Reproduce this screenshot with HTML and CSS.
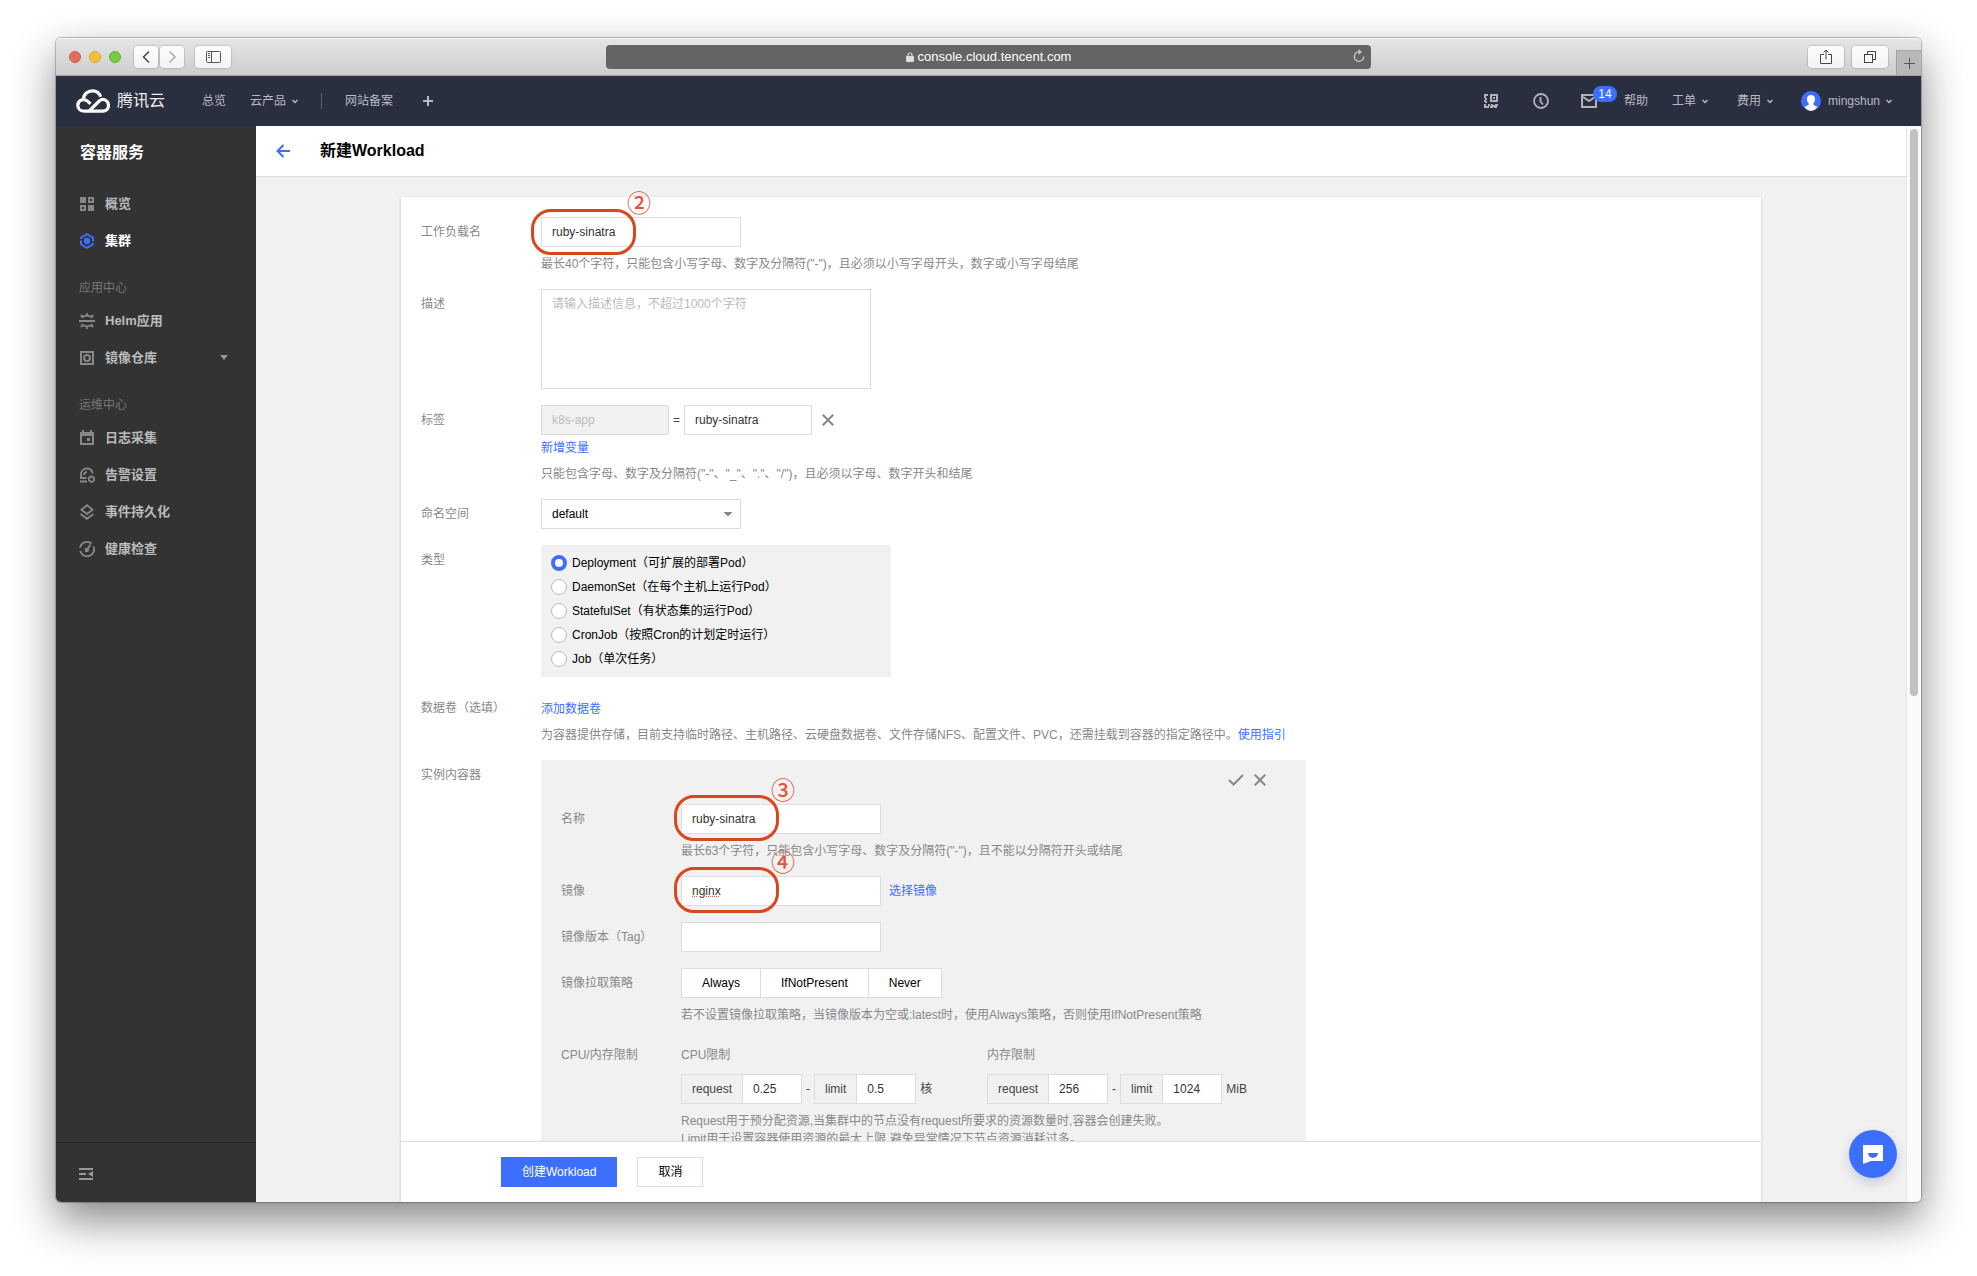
FILE: index.html
```html
<!DOCTYPE html>
<html lang="zh-CN">

<head>
  <meta charset="utf-8">
  <title>新建Workload - 容器服务</title>
  <link rel="stylesheet" href="styles.css">
</head>

<body>
<div class="window">

  <!-- Browser toolbar -->
  <div class="toolbar">
    <div class="toolbar-left">
      <div class="lights"><i class="red"></i><i class="yellow"></i><i class="green"></i></div>
      <div class="nav-buttons">
        <button type="button" aria-label="后退"><svg width="24" height="22" viewBox="0 0 24 22"><path d="M15 5.500l-5.500 5.500 5.500 5.500" fill="none" stroke="#444" stroke-width="1.500"/></svg></button>
        <button type="button" aria-label="前进"><svg width="24" height="22" viewBox="0 0 24 22"><path d="M9.500 5.500l5.500 5.500-5.500 5.500" fill="none" stroke="#aaa" stroke-width="1.500"/></svg></button>
      </div>
      <button class="wide" type="button" aria-label="边栏"><svg width="15" height="12" viewBox="0 0 15 12" fill="none" stroke="#555"><rect x="0.500" y="0.500" width="14" height="11" rx="1"/><path d="M5.500 0v12M2 2.500h2M2 4.500h2M2 6.500h2"/></svg></button>
    </div>
    <div class="address">
      <svg width="8" height="10" viewBox="0 0 8 10"><rect y="4" width="8" height="6" rx="1" fill="#ddd"/><path d="M2 5V3a2 2 0 0 1 4 0v2" fill="none" stroke="#ddd" stroke-width="1.200"/></svg>
      <span>console.cloud.tencent.com</span>
      <svg class="reload" width="12" height="14" viewBox="0 0 12 14"><path d="M6 2.900A4.700 4.700 0 1 0 10.700 7.500" fill="none" stroke="#ccc" stroke-width="1.200"/><path d="M5.500 0L9 2.900 5.500 5.800z" fill="#ccc"/></svg>
    </div>
    <div class="toolbar-right">
      <button class="wide" type="button" aria-label="共享"><svg width="12" height="16" viewBox="0 0 12 16" fill="none" stroke="#444"><path d="M4 5.500H.5v9h11v-9H8M6 10.500V1M3.500 3.500L6 1l2.500 2.500"/></svg></button>
      <button class="wide" type="button" aria-label="标签页概览"><svg width="14" height="14" viewBox="0 0 14 14" fill="none" stroke="#444"><rect x="1.500" y="4.500" width="8" height="8"/><path d="M4.500 4V1.500h8v8H10"/></svg></button>
      <button class="new-tab" type="button" aria-label="新标签页"><svg width="11" height="11" viewBox="0 0 11 11"><path d="M5.500 0v11M0 5.500h11" stroke="#555"/></svg></button>
    </div>
  </div>

  <!-- Console header -->
  <header class="topnav">
    <a class="logo" href="#">
      <svg width="34" height="24" viewBox="0 0 34 24" fill="none" stroke="#fff" stroke-width="3.200"><path d="M7.500 10.600C7.500 5.300 11.500 1.900 16.500 1.900c4 0 7 2.200 8.200 5.800M13 22.200L23.500 11.800c3.800-3 9-.3 9 4.500 0 3.500-2.500 5.900-5.800 5.900H8.500c-4 0-6.700-2.600-6.700-5.800 0-5.200 6.100-7.700 9.700-4.200l3 2.700"/></svg>
      <span>腾讯云</span>
    </a>
    <nav class="topnav-left">
      <a href="#">总览</a>
      <a href="#">云产品<svg class="chev" width="6" height="5" viewBox="0 0 6 5"><path d="M.5 1L3 3.500 5.500 1"/></svg></a>
      <i class="sep"></i>
      <a href="#">网站备案</a>
      <a class="add" href="#" aria-label="添加"><svg width="10" height="10" viewBox="0 0 10 10"><path d="M5 0v10M0 5h10" stroke="#b8bbc0" stroke-width="2"/></svg></a>
    </nav>
    <nav class="topnav-right">
      <a href="#" aria-label="小程序"><svg width="14" height="14" viewBox="0 0 14 14" fill="#b0b3b8"><path d="M0 0h4v2H2v2H0zM0 6h2v1h1v2H1V8H0zM1 4h2v2H1zM6 0h8v8H6zM8 2v4h4V2zM9 3h2v2H9zM0 10h2v2h3v2H0zM4 10h2v2H4zM7 10h2v1h2v-1h3v2h-1v2h-3v-1H9v1H6v-2h1z" fill-rule="evenodd"/></svg></a>
      <a class="clock" href="#" aria-label="历史"><svg width="16" height="16" viewBox="0 0 16 16" fill="none" stroke="#b0b3b8" stroke-width="1.800"><circle cx="8" cy="8" r="7"/><path d="M7.500 4v4.500L10 11.500"/></svg></a>
      <a class="mail" href="#" aria-label="消息"><svg width="16" height="14" viewBox="0 0 16 14" fill="none" stroke="#b0b3b8" stroke-width="2"><rect x="1" y="1" width="14" height="12"/><path d="M2 3l6 4 6-4"/></svg><span class="badge">14</span></a>
      <a class="help" href="#">帮助</a>
      <a class="ticket" href="#">工单<svg class="chev" width="6" height="5" viewBox="0 0 6 5"><path d="M.5 1L3 3.500 5.500 1"/></svg></a>
      <a class="cost" href="#">费用<svg class="chev" width="6" height="5" viewBox="0 0 6 5"><path d="M.5 1L3 3.500 5.500 1"/></svg></a>
      <a class="user" href="#"><svg width="20" height="20" viewBox="0 0 20 20"><circle cx="10" cy="10" r="10" fill="#3d6fff"/><path d="M10 4c2.800 0 4.200 2 4 4.600-.1 2-1 3.200-1.700 4v1.100l4.200 2.300A10 10 0 0 1 10 20a10 10 0 0 1-6.500-4l4.200-2.300v-1.100c-.7-.8-1.600-2-1.700-4C5.800 6 7.200 4 10 4z" fill="#fff"/></svg><span>mingshun</span><svg class="chev" width="6" height="5" viewBox="0 0 6 5"><path d="M.5 1L3 3.500 5.500 1"/></svg></a>
    </nav>
  </header>

  <div class="body">
    <!-- Side menu -->
    <aside class="sidebar">
      <h2>容器服务</h2>
      <ul>
        <li><a href="#"><svg width="16" height="16" viewBox="0 0 16 16" fill="#888"><path d="M1 1h6v6H1zM9 1h6v6H9zM11 3v2h2V3zM1 9h6v6H1zM3 11v2h2v-2zM9 9h6v6H9z" fill-rule="evenodd"/></svg>概览</a></li>
        <li><a class="active" href="#"><svg width="16" height="16" viewBox="0 0 16 16" fill="none" stroke="#3d6fff" stroke-width="2"><path d="M2 6V4.700L8 1.200l6 3.500v3.800M2 7.500v3.800l6 3.500 6-3.500V10"/><circle cx="8" cy="8" r="3.200" fill="#3d6fff" stroke="none"/></svg>集群</a></li>
      </ul>
      <h3>应用中心</h3>
      <ul>
        <li><a href="#"><svg width="16" height="16" viewBox="0 0 16 16" fill="none" stroke="#888" stroke-width="1.800"><path d="M0 8h16M2.500 4.800c3-2.800 8-2.800 11 0M2.500 11.200c3 2.800 8 2.800 11 0M8 0v2.500M8 13.500V16M1.800 1.800l1.700 2M14.200 1.800l-1.700 2M1.800 14.200l1.700-2M14.200 14.200l-1.700-2"/></svg>Helm应用</a></li>
        <li><a href="#"><svg width="16" height="16" viewBox="0 0 16 16" fill="none" stroke="#888" stroke-width="2"><rect x="2" y="2" width="12" height="12"/><circle cx="8" cy="8" r="3"/></svg>镜像仓库<svg class="caret" width="8" height="5" viewBox="0 0 8 5"><path d="M0 0h8L4 5z" fill="#999"/></svg></a></li>
      </ul>
      <h3>运维中心</h3>
      <ul>
        <li><a href="#"><svg width="16" height="16" viewBox="0 0 16 16" fill="#888"><path d="M3 0h2v2h6V0h2v2h2v13H1V2h2zM3 6v7h10V6zM8 8h3v3H8z" fill-rule="evenodd"/></svg>日志采集</a></li>
        <li><a href="#"><svg width="16" height="16" viewBox="0 0 16 16" fill="none" stroke="#888" stroke-width="1.800"><path d="M2 11V7.500C2 4 4.500 1.500 8 1.500c3 0 5.200 2 5.800 5M5 8c0-2 1.200-3 3-3.200M1 11h6.500M1 14.500h7"/><path d="M12.500 9.200l2.500 1.500v2.800L12.500 15 10 13.500v-2.800z"/></svg>告警设置</a></li>
        <li><a href="#"><svg width="16" height="16" viewBox="0 0 16 16" fill="none" stroke="#888" stroke-width="1.800"><path d="M8 1.200L13.500 5.700 8 10 2.500 5.700zM1.500 10L8 14.800 14.500 10"/></svg>事件持久化</a></li>
        <li><a href="#"><svg width="16" height="16" viewBox="0 0 16 16" fill="none" stroke="#888" stroke-width="1.800"><path d="M1 7A7 7 0 0 1 12.500 2.600M14.500 5.500A7 7 0 1 1 1.300 10M8 9l3.500-5.500"/><circle cx="7.800" cy="9" r="1.300" fill="#888"/></svg>健康检查</a></li>
      </ul>
      <div class="collapse"><button type="button" aria-label="收起菜单"><svg width="14" height="12" viewBox="0 0 14 12" fill="#999"><path d="M0 0h14v2H0zM0 5h7v2H0zM0 10h14v2H0zM14 3v6L9 6z"/></svg></button></div>
    </aside>

    <main class="main">
      <div class="page-head">
        <a href="#" aria-label="返回"><svg width="14" height="14" viewBox="0 0 14 14" fill="none" stroke="#3d6fff" stroke-width="2"><path d="M14 7H1.500M7.500 1l-6 6 6 6"/></svg></a>
        <h1>新建Workload</h1>
      </div>

      <form class="page-body">
        <div class="card">
          <div class="row">
            <label for="name">工作负载名</label>
            <div class="field">
              <div class="mark">
                <input class="text" id="name" type="text" value="ruby-sinatra">
                <span class="ring"></span><span class="step">②</span>
              </div>
              <p class="hint">最长40个字符，只能包含小写字母、数字及分隔符("-")，且必须以小写字母开头，数字或小写字母结尾</p>
            </div>
          </div>

          <div class="row">
            <label for="desc">描述</label>
            <div class="field"><textarea class="text" id="desc" placeholder="请输入描述信息，不超过1000个字符"></textarea></div>
          </div>

          <div class="row">
            <label for="tag-value">标签</label>
            <div class="field">
              <div class="inline">
                <input class="text tag" type="text" value="k8s-app" aria-label="标签名" disabled>
                <span class="eq">=</span>
                <input class="text tag" id="tag-value" type="text" value="ruby-sinatra">
                <button class="icon-btn tag-del" type="button" aria-label="删除"><svg width="12" height="12" viewBox="0 0 12 12"><path d="M.8.8l10.400 10.400M11.200.8L.8 11.200"/></svg></button>
              </div>
              <a class="link add-var" href="#">新增变量</a>
              <p class="hint">只能包含字母、数字及分隔符("-"、"_"、"."、"/")，且必须以字母、数字开头和结尾</p>
            </div>
          </div>

          <div class="row">
            <label for="ns">命名空间</label>
            <div class="field">
              <select class="text" id="ns"><option>default</option></select>
            </div>
          </div>

          <div class="row">
            <span class="label">类型</span>
            <div class="field">
              <div class="types">
                <label><input type="radio" name="type" checked>Deployment（可扩展的部署Pod）</label>
                <label><input type="radio" name="type">DaemonSet（在每个主机上运行Pod）</label>
                <label><input type="radio" name="type">StatefulSet（有状态集的运行Pod）</label>
                <label><input type="radio" name="type">CronJob（按照Cron的计划定时运行）</label>
                <label><input type="radio" name="type">Job（单次任务）</label>
              </div>
            </div>
          </div>

          <div class="row">
            <span class="label">数据卷（选填）</span>
            <div class="field">
              <a class="link add-volume" href="#">添加数据卷</a>
              <p class="hint">为容器提供存储，目前支持临时路径、主机路径、云硬盘数据卷、文件存储NFS、配置文件、PVC，还需挂载到容器的指定路径中。<a class="link" href="#">使用指引</a></p>
            </div>
          </div>

          <div class="row">
            <span class="label">实例内容器</span>
            <div class="container">
              <div class="container-tools">
                <button class="icon-btn" type="button" aria-label="保存"><svg width="16" height="12" viewBox="0 0 16 12"><path d="M1 6l4.500 4.500L15 1"/></svg></button>
                <button class="icon-btn" type="button" aria-label="删除"><svg width="12" height="12" viewBox="0 0 12 12"><path d="M.8.8l10.400 10.400M11.200.8L.8 11.200"/></svg></button>
              </div>

              <div class="row">
                <label for="c-name">名称</label>
                <div class="field">
                  <div class="mark inner">
                    <input class="text" id="c-name" type="text" value="ruby-sinatra">
                    <span class="ring"></span><span class="step">③</span>
                  </div>
                  <p class="hint">最长63个字符，只能包含小写字母、数字及分隔符("-")，且不能以分隔符开头或结尾</p>
                </div>
              </div>

              <div class="row">
                <label for="image">镜像</label>
                <div class="field inline">
                  <div class="mark inner">
                    <input class="text misspelt" id="image" type="text" value="nginx">
                    <span class="ring"></span><span class="step">④</span>
                  </div>
                  <a class="link pick" href="#">选择镜像</a>
                </div>
              </div>

              <div class="row">
                <label for="image-tag">镜像版本（Tag）</label>
                <div class="field"><input class="text" id="image-tag" type="text"></div>
              </div>

              <div class="row">
                <span class="label">镜像拉取策略</span>
                <div class="field">
                  <div class="segment">
                    <button type="button">Always</button>
                    <button type="button">IfNotPresent</button>
                    <button type="button">Never</button>
                  </div>
                  <p class="hint">若不设置镜像拉取策略，当镜像版本为空或:latest时，使用Always策略，否则使用IfNotPresent策略</p>
                </div>
              </div>

              <div class="row">
                <span class="label">CPU/内存限制</span>
                <div class="field">
                  <div class="limits">
                    <div>
                      <span class="label">CPU限制</span>
                      <div class="inline">
                        <label class="addon" for="cpu-req">request</label><input class="text num" id="cpu-req" type="text" value="0.25">
                        <span class="dash">-</span>
                        <label class="addon" for="cpu-lim">limit</label><input class="text num" id="cpu-lim" type="text" value="0.5">
                        <span class="unit">核</span>
                      </div>
                    </div>
                    <div>
                      <span class="label">内存限制</span>
                      <div class="inline">
                        <label class="addon" for="mem-req">request</label><input class="text num" id="mem-req" type="text" value="256">
                        <span class="dash">-</span>
                        <label class="addon" for="mem-lim">limit</label><input class="text num" id="mem-lim" type="text" value="1024">
                        <span class="unit">MiB</span>
                      </div>
                    </div>
                  </div>
                  <p class="hint">Request用于预分配资源,当集群中的节点没有request所要求的资源数量时,容器会创建失败。<br>Limit用于设置容器使用资源的最大上限,避免异常情况下节点资源消耗过多。</p>
                </div>
              </div>
            </div>
          </div>
        </div>

        <div class="actions">
          <button class="btn primary" type="submit">创建Workload</button>
          <button class="btn" type="button">取消</button>
        </div>
      </form>
    </main>

    <div class="scrollbar"><div class="thumb"></div></div>
  </div>

  <button class="chat" type="button" aria-label="在线咨询"><svg width="20" height="20" viewBox="0 0 20 20"><path d="M0 1h20v16H8l-8 3z" fill="#fff"/><path d="M5 9h10a5 5 0 0 1-10 0z" fill="#3d6fff"/></svg></button>
</div>
</body>

</html>
```

FILE: styles.css
```css
* { box-sizing: border-box }

body {
  background: white;
  font: 12px/18px "Liberation Sans", "Noto Sans CJK SC", sans-serif;
  margin: 0;
  padding: 38px 56px 74px;
}

button, input, textarea, select { font: inherit; color: inherit; margin: 0 }
button { cursor: pointer; padding: 0 }
a { color: inherit; text-decoration: none }
h1, h2, h3, p, ul { margin: 0; padding: 0 }
ul { list-style: none }
svg { display: block; flex: none }

.window {
  position: relative;
  display: flex;
  flex-direction: column;
  height: calc(100vh - 112px);
  border-radius: 5px;
  box-shadow: 0 0 1px 1px rgba(0, 0, 0, 0.25), 0 18px 44px rgba(0, 0, 0, 0.48);
}

/* Browser toolbar */

.toolbar {
  display: grid;
  grid-template-columns: 1fr 41% 1fr;
  align-items: center;
  height: 38px;
  border-radius: 5px 5px 0 0;
  border-bottom: 1px solid #a0a0a0;
  background: linear-gradient(#e6e6e6, #cdcdcd);
  box-shadow: inset 0 1px 0 #f5f5f5;
}

.toolbar-left { display: flex; align-items: center; padding-left: 13px }
.lights { display: flex; gap: 8px; margin-right: 13px }
.lights i { width: 12px; height: 12px; border-radius: 50% }
.lights .red { background: #e0705c; border: 1px solid #cc5a48 }
.lights .yellow { background: #f2c13a; border: 1px solid #d9a52c }
.lights .green { background: #7ac943; border: 1px solid #62ae33 }

.toolbar button {
  display: flex;
  align-items: center;
  justify-content: center;
  height: 22px;
  background: linear-gradient(#fdfdfd, #f3f3f3);
  border: 0;
  border-radius: 4px;
  box-shadow: 0 0 1px 1px rgba(0, 0, 0, 0.13);
}
.toolbar button.wide { width: 36px }
.nav-buttons { display: flex; gap: 2px; margin-right: 11px }

.address {
  position: relative;
  display: flex;
  align-items: center;
  justify-content: center;
  gap: 4px;
  height: 24px;
  border-radius: 4px;
  background: #646464;
  color: white;
  font-size: 13px;
}
.address .reload { position: absolute; right: 6px; top: 4px }

.toolbar-right { display: flex; align-items: center; justify-content: flex-end; gap: 8px; height: 100% }
.toolbar button.new-tab {
  align-self: flex-end;
  width: 25px;
  height: 25px;
  border: solid #a3a3a3;
  border-width: 1px 0 0 1px;
  border-radius: 0;
  background: #b8b8b8;
  box-shadow: none;
}

/* Console header */

.topnav {
  display: flex;
  align-items: center;
  height: 50px;
  padding: 0 29px 0 20px;
  background: #2a2f40;
  color: #b8bbc0;
}
.topnav a { display: flex; align-items: center }
.logo { gap: 7px; margin-right: 37px; color: #eee; font-size: 16px }
.topnav-left { display: flex; align-items: center; gap: 24px }
.topnav-left .sep { width: 1px; height: 16px; margin: 0 -1px; background: #5a5e6b }
.topnav-left .add { margin-left: 6px }
.chev { margin-left: 6px; fill: none; stroke: #b8bbc0; stroke-width: 1.5 }

.topnav-right { display: flex; align-items: center; margin-left: auto }
.clock { margin-left: 35px }
.mail { position: relative; margin-left: 32px }
.mail .badge {
  position: absolute;
  left: 12px;
  top: -8px;
  width: 24px;
  height: 16px;
  border-radius: 8px;
  background: #3d6fff;
  color: white;
  line-height: 16px;
  text-align: center;
}
.help { margin-left: 27px }
.ticket { margin-left: 24px }
.cost { margin-left: 29px }
.user { margin-left: 28px }
.user span { margin-left: 7px }

/* Side menu */

.body { display: flex; flex: 1; min-height: 0; overflow: hidden; border-radius: 0 0 5px 5px }

.sidebar {
  display: flex;
  flex-direction: column;
  flex: none;
  width: 200px;
  background: #333;
  color: #bbb;
}
.sidebar h2 { padding: 15px 24px 20px; color: white; font-size: 16px; line-height: 24px }
.sidebar h3 { padding: 20px 23px 5px; color: #777; font-size: 12px; font-weight: normal; line-height: 18px }
.sidebar li a {
  display: flex;
  align-items: center;
  gap: 10px;
  height: 37px;
  padding: 0 28px 0 23px;
  font-size: 13px;
  font-weight: bold;
}
.sidebar li a.active { color: white }
.sidebar .caret { margin-left: auto }
.collapse { height: 60px; margin-top: auto; padding: 24px 23px; border-top: 1px solid #262626 }
.collapse button { border: 0; background: none }

/* Page */

.main { display: flex; flex-direction: column; flex: 1; min-width: 0; background: #f1f1f1 }

.page-head {
  display: flex;
  align-items: center;
  flex: none;
  gap: 30px;
  height: 51px;
  padding: 0 20px;
  background: white;
  border-bottom: 1px solid #ddd;
}
.page-head h1 { font-size: 16px; line-height: 24px }

.page-body {
  display: flex;
  flex-direction: column;
  align-items: center;
  flex: 1;
  min-height: 0;
  padding-top: 20px;
}

.card {
  flex: 1;
  min-height: 0;
  width: 100%;
  max-width: 1360px;
  padding: 20px;
  background: white;
  box-shadow: 0 1px 3px rgba(0, 0, 0, 0.2);
}

/* Stays over the end of the form */
.actions {
  z-index: 1;
  display: flex;
  gap: 20px;
  flex: none;
  width: 100%;
  max-width: 1360px;
  padding: 15px 100px;
  background: white;
  border-top: 1px solid #ddd;
  box-shadow: 0 2px 3px rgba(0, 0, 0, 0.2);
}
.btn { height: 30px; padding: 0 20px; background: white; border: 1px solid #ddd; color: black }
.btn.primary { background: #3d6fff; border-color: #3d6fff; color: white }

/* Form rows */

.row { display: grid; grid-template-columns: 120px 1fr; margin-bottom: 16px }
.row > label, .label { padding-top: 6px; color: #888 }
.hint { margin-top: 8px; color: #888 }
.link { color: #3d6fff }
.inline { display: flex; align-items: center }

.text {
  display: block;
  width: 200px;
  height: 30px;
  padding: 0 10px;
  border: 1px solid #ddd;
  border-radius: 0;
  outline: none;
  background: white;
  color: #333;
}
.text::placeholder { color: #bbb }
.text:disabled { background: #f1f1f1; color: #bbb }

textarea.text { width: 330px; height: 100px; padding: 5px 10px; resize: none }
select.text {
  appearance: none;
  color: black;
  background: linear-gradient(to bottom right, #888 50%, transparent 50%) no-repeat right 8px top 12px / 4px 5px,
    linear-gradient(to bottom left, #888 50%, transparent 50%) no-repeat right 12px top 12px / 4px 5px,
    white;
}

.text.tag { width: 128px }
.eq { width: 15px; text-align: center; color: #444 }
.icon-btn { border: 0; background: none }
.icon-btn path { fill: none; stroke: #888; stroke-width: 2 }
.tag-del { margin-left: 10px }
.add-var { display: block; margin-top: 4px }
.add-volume { display: block; padding-top: 7px }

.types { width: 350px; padding: 6px 10px; background: #f1f1f1; color: black }
.types label { display: flex; align-items: center; gap: 5px; height: 24px }
.types input {
  appearance: none;
  width: 16px;
  height: 16px;
  border: 1px solid #bbb;
  border-radius: 50%;
  background: white;
}
.types input:checked { border: 4px solid #3d6fff }

/* Container settings */

.container { width: 765px; padding: 14px 20px 20px; background: #f1f1f1 }
.container-tools { display: flex; align-items: center; gap: 10px; height: 12px; margin-bottom: 18px; padding-right: 20px; justify-content: flex-end }
.pick { margin-left: 8px }
.misspelt { text-decoration: underline dotted #e05a4a }

.segment { display: flex }
.segment button { height: 30px; padding: 0 20px; background: white; border: 1px solid #ddd; color: black }
.segment button + button { border-left: 0 }

.limits { display: grid; grid-template-columns: 306px 1fr }
.limits .label { display: block; height: 34px }
.addon { height: 30px; padding: 0 10px; border: 1px solid #ddd; color: #444; line-height: 28px }
.text.num { width: 59px; border-left: 0 }
.dash { width: 12px; text-align: center; color: #444 }
.unit { margin-left: 4px; color: #444 }

/* Numbered steps over the fields */

.mark { position: relative; width: 200px }
.ring {
  position: absolute;
  left: -10px;
  top: -8px;
  width: 105px;
  height: 46px;
  border: 3px solid #d9481c;
  border-radius: 20px;
  pointer-events: none;
}
.inner .ring { left: -7px; top: -9px }
.step {
  position: absolute;
  left: 86px;
  top: -27px;
  color: #e0563e;
  font-family: "Noto Sans CJK SC", sans-serif;
  font-size: 24px;
  font-weight: 500;
  line-height: 24px;
}
.inner .step { left: 90px }

/* Scrollbar and chat */

.scrollbar { flex: none; width: 15px; padding: 3px; background: #fafafa; border-left: 1px solid #e6e6e6 }
.thumb { width: 8px; height: 53%; border-radius: 4px; background: #c1c1c1 }

.chat {
  position: absolute;
  right: 24px;
  bottom: 24px;
  display: flex;
  align-items: center;
  justify-content: center;
  width: 48px;
  height: 48px;
  border: 0;
  border-radius: 50%;
  background: #3d6fff;
  box-shadow: 0 5px 12px rgba(40, 60, 120, 0.2);
}
```
